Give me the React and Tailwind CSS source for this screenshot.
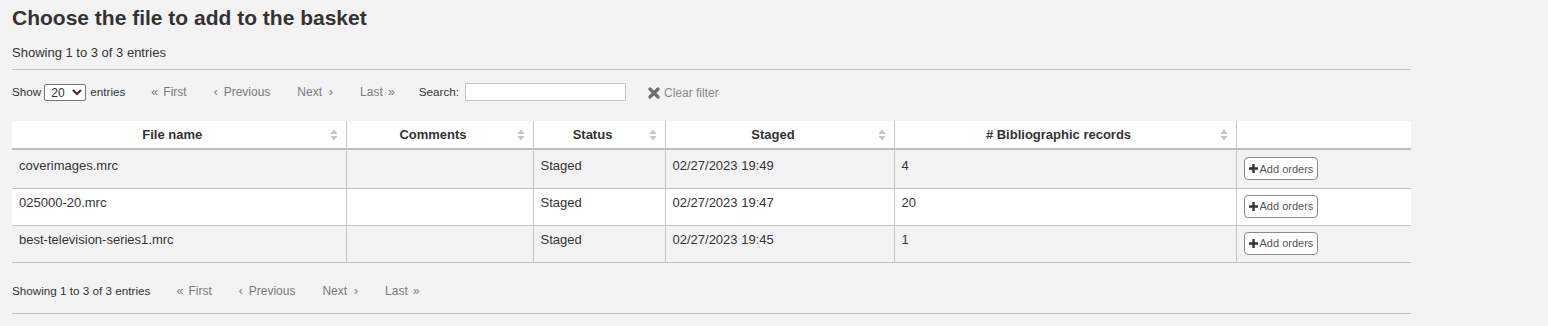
import React from "react";

const font = { fontFamily: '"Liberation Sans", Arial, sans-serif' };

function SortIcon() {
  return (
    <svg width="8" height="12" viewBox="0 0 8 12" className="shrink-0">
      <path d="M4 0.5 L7.5 5 L0.5 5 Z" fill="#c4c4c4" />
      <path d="M4 11.5 L7.5 7 L0.5 7 Z" fill="#c4c4c4" />
    </svg>
  );
}

function Plus() {
  return (
    <svg width="9" height="9" viewBox="0 0 9 9" className="shrink-0">
      <path d="M3.3 0 H5.7 V3.3 H9 V5.7 H5.7 V9 H3.3 V5.7 H0 V3.3 H3.3 Z" fill="#333" />
    </svg>
  );
}

function XIcon() {
  return (
    <svg width="12" height="12" viewBox="0 0 12 12" className="shrink-0">
      <path d="M2 2 L10 10 M10 2 L2 10" stroke="#6f6f6f" strokeWidth="3.2" strokeLinecap="round" />
    </svg>
  );
}

function Pager({ className = "" }) {
  return (
    <div className={`flex items-center gap-[27px] text-[12px] text-[#7b7b7b] ${className}`}>
      <span className="flex items-center">
        <span className="inline-block w-[12px]">«</span>First
      </span>
      <span className="flex items-center">
        <span className="inline-block w-[10px]">‹</span>Previous
      </span>
      <span className="flex items-center">
        Next<span className="inline-block w-[11px] text-right">›</span>
      </span>
      <span className="flex items-center">
        Last<span className="inline-block w-[12px] text-right">»</span>
      </span>
    </div>
  );
}

const cols = [
  { name: "File name", w: "w-[334px]" },
  { name: "Comments", w: "w-[187px]" },
  { name: "Status", w: "w-[132px]" },
  { name: "Staged", w: "w-[229px]" },
  { name: "# Bibliographic records", w: "w-[342px]" },
  { name: "", w: "w-[175px]" },
];

const rows = [
  { h: "h-[39px]", pt: "pt-[8px]", v: ["coverimages.mrc", "", "Staged", "02/27/2023 19:49", "4"] },
  { h: "h-[37px]", pt: "pt-[6px]", v: ["025000-20.mrc", "", "Staged", "02/27/2023 19:47", "20"] },
  { h: "h-[37px]", pt: "pt-[6px]", v: ["best-television-series1.mrc", "", "Staged", "02/27/2023 19:45", "1"] },
];

export default function App() {
  return (
    <div className="w-[1548px] h-[326px] bg-[#f3f3f3] text-[#333] overflow-hidden" style={font}>
      <div className="w-[1399px] ml-[12px]">
        <h1 className="text-[21px] font-bold leading-[24px] pt-[6px] text-[#333]">
          Choose the file to add to the basket
        </h1>
        <div className="text-[13px] leading-[15px] mt-[15px]">Showing 1 to 3 of 3 entries</div>
        <div className="mt-[9px] border-t border-[#c4c4c4]" />
        <div className="flex items-center h-[20px] mt-[12px] text-[11.7px]">
          <span>Show</span>
          <select
            defaultValue="20"
            className="ml-[3px] mr-[4px] w-[42px] h-[17px] text-[12px] leading-[15px] bg-white border border-[#767676] rounded-[2px] px-[2px] text-[#333]"
            style={font}
          >
            <option>10</option>
            <option>20</option>
            <option>50</option>
          </select>
          <span>entries</span>
          <Pager className="ml-[26px]" />
          <span className="ml-[24px]">Search:</span>
          <input className="ml-[6px] w-[161px] h-[18px] bg-white border border-[#c4c4c4]" />
          <span className="ml-[22px] flex items-center gap-[4px] text-[12px] text-[#8a8a8a] mt-[2px]">
            <XIcon />
            Clear filter
          </span>
        </div>
        <table className="mt-[19px] w-[1399px] border-collapse text-[13px] table-fixed">
          <thead>
            <tr className="bg-white h-[27px]">
              {cols.map((c, i) => (
                <th
                  key={i}
                  className={`${c.w} font-bold p-0 border-b-2 border-b-[#bcbcbc] ${
                    i < cols.length - 1 ? "border-r border-r-[#c4c4c4]" : ""
                  }`}
                >
                  <div className="relative flex items-center justify-center h-[27px] pl-[4px] pr-[17px]">
                    <span>{c.name}</span>
                    {c.name && (
                      <span className="absolute right-[8px] top-[8px]">
                        <SortIcon />
                      </span>
                    )}
                  </div>
                </th>
              ))}
            </tr>
          </thead>
          <tbody>
            {rows.map((r, ri) => (
              <tr
                key={ri}
                className={`${r.h} ${ri % 2 === 1 ? "bg-white" : "bg-[#f3f3f3]"} border-b border-b-[#c4c4c4]`}
              >
                {r.v.map((v, ci) => (
                  <td
                    key={ci}
                    className={`align-top px-[7px] ${r.pt} pb-0 leading-[15px] border-r border-r-[#c4c4c4]`}
                  >
                    {v}
                  </td>
                ))}
                <td className="align-middle px-[7px] py-0">
                  <button className="flex items-center gap-[1px] h-[23px] px-[4px] bg-white border border-[#8a8a8a] rounded-[4px] text-[11px] text-[#555]">
                    <Plus />
                    <span className="ml-[1px]">Add orders</span>
                  </button>
                </td>
              </tr>
            ))}
          </tbody>
        </table>
        <div className="flex items-center mt-[20px] h-[16px]">
          <span className="text-[11.7px]">Showing 1 to 3 of 3 entries</span>
          <Pager className="ml-[26px]" />
        </div>
        <div className="mt-[14px] border-t border-[#c4c4c4]" />
      </div>
    </div>
  );
}
